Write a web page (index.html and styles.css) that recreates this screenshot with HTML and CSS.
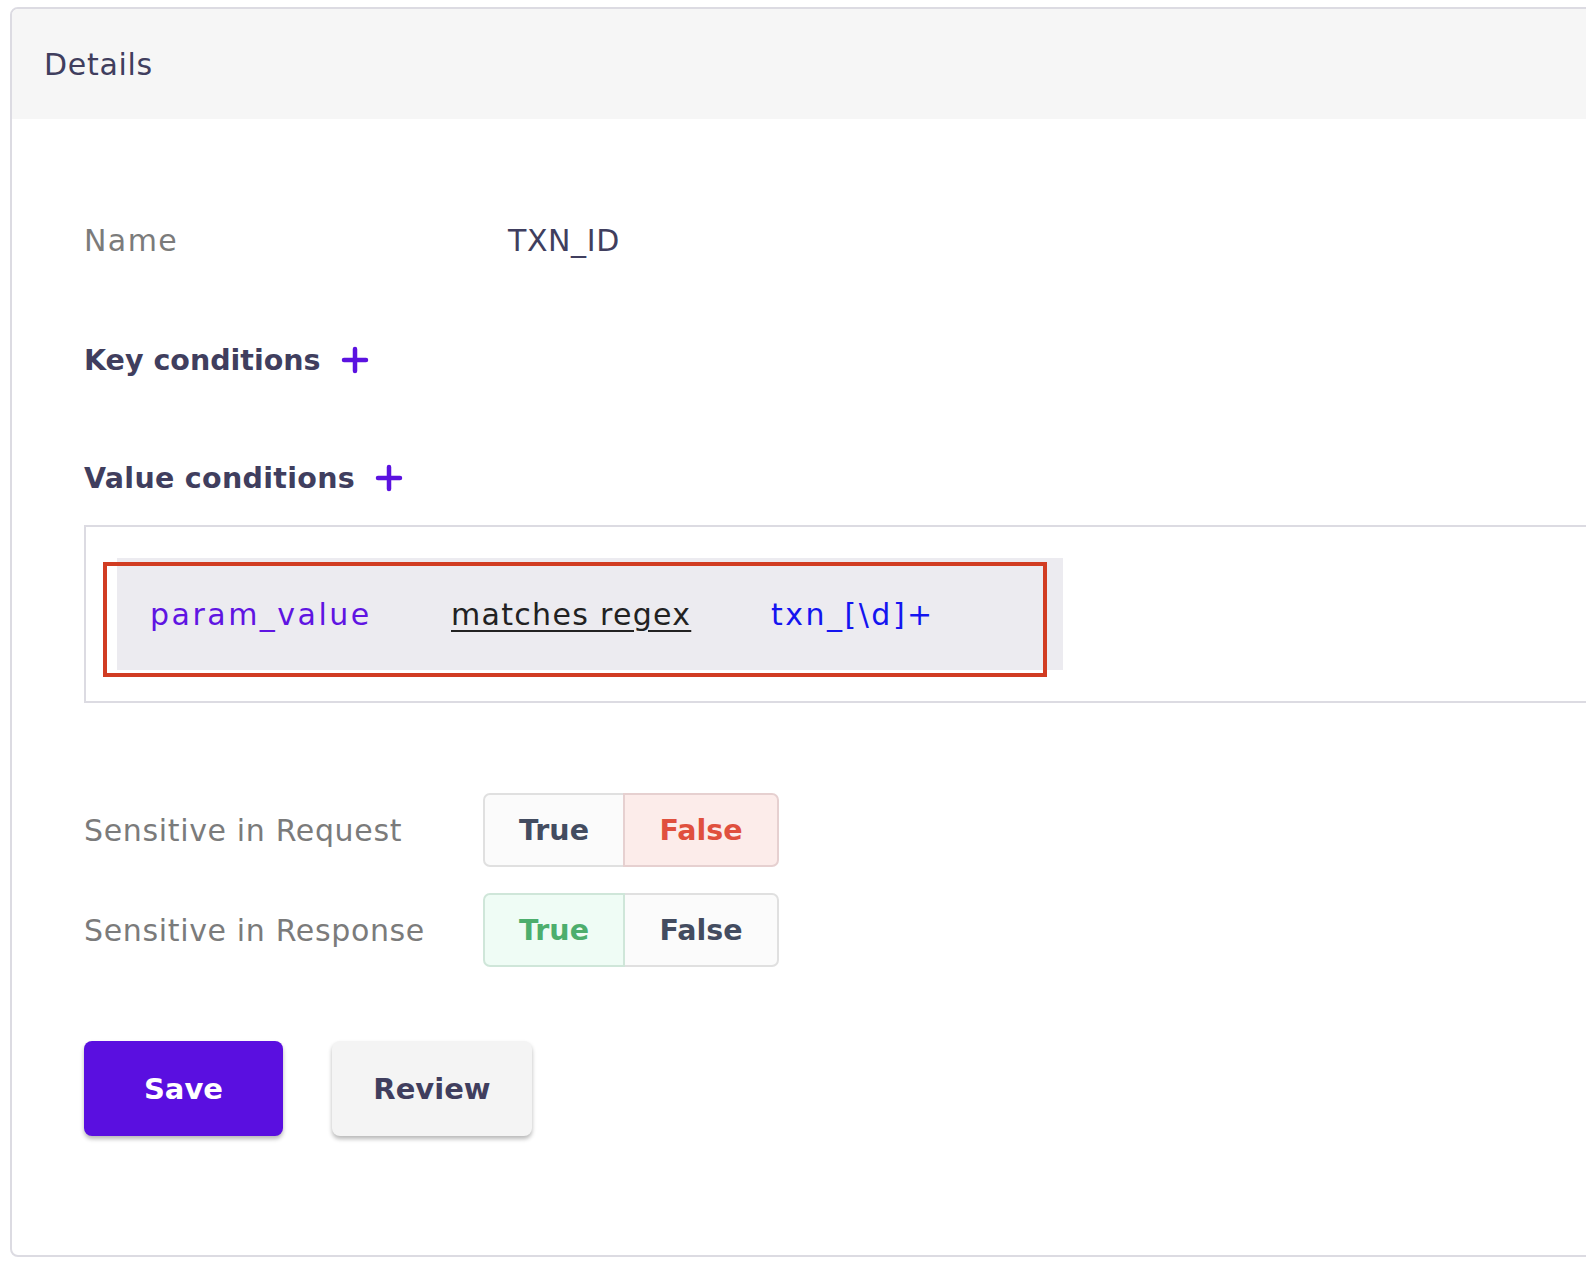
FILE: index.html
```html
<!DOCTYPE html>
<html lang="en">
<head>
<meta charset="utf-8">
<title>Details</title>
<link rel="stylesheet" href="styles.css">
</head>
<body>
<div class="card">
  <div class="card-header">Details</div>
  <div class="card-body">
    <div class="field-row">
      <div class="field-label">Name</div>
      <div class="field-value">TXN_ID</div>
    </div>

    <div class="section-title key-title">
      <span>Key conditions</span>
      <svg class="plus" viewBox="0 0 28 28" width="28" height="28"><path d="M3 14H25M14 3V25" stroke="#5b12e0" stroke-width="4.5" stroke-linecap="round" fill="none"/></svg>
    </div>

    <div class="section-title value-title">
      <span>Value conditions</span>
      <svg class="plus" viewBox="0 0 28 28" width="28" height="28"><path d="M3 14H25M14 3V25" stroke="#5b12e0" stroke-width="4.5" stroke-linecap="round" fill="none"/></svg>
    </div>

    <div class="conditions-box">
      <div class="condition">
        <span class="cond-param">param_value</span>
        <span class="cond-op">matches regex</span>
        <span class="cond-value">txn_[\d]+</span>
        <div class="highlight"></div>
      </div>
    </div>

    <div class="toggle-row first">
      <div class="toggle-label">Sensitive in Request</div>
      <div class="toggle">
        <div class="opt opt-true">True</div>
        <div class="opt opt-false sel-false">False</div>
      </div>
    </div>
    <div class="toggle-row">
      <div class="toggle-label">Sensitive in Response</div>
      <div class="toggle">
        <div class="opt opt-true sel-true">True</div>
        <div class="opt opt-false">False</div>
      </div>
    </div>

    <div class="actions">
      <button class="btn btn-primary">Save</button>
      <button class="btn btn-secondary">Review</button>
    </div>
  </div>
</div>
</body>
</html>
```

FILE: styles.css
```css
html, body {
  margin: 0;
  padding: 0;
  background: #ffffff;
  overflow: hidden;
}
body {
  font-family: "DejaVu Sans", "Open Sans", sans-serif;
  color: #403e5e;
}
.card {
  margin: 7px 0 0 10px;
  width: 1640px;
  height: 1250px;
  box-sizing: border-box;
  border: 2px solid #dcdbe2;
  border-radius: 8px;
  overflow: hidden;
}
.card-header {
  height: 110px;
  background: #f6f6f6;
  display: flex;
  align-items: center;
  padding-left: 32px;
  font-size: 30px;
  font-weight: 400;
  letter-spacing: 0.7px;
  color: #403e5e;
}
.card-body {
  padding: 101px 0 0 72px;
}
.field-row {
  display: flex;
  height: 40px;
  align-items: center;
}
.field-label {
  width: 424px;
  font-size: 30px;
  letter-spacing: 1.4px;
  color: #7b7b7b;
}
.field-value {
  font-size: 30px;
  letter-spacing: 0.6px;
  color: #403e5e;
}
.section-title {
  display: flex;
  align-items: center;
  height: 40px;
  gap: 20px;
  font-size: 28.5px;
  font-weight: 700;
  color: #403e5e;
}
.value-title span { letter-spacing: 0.3px; }
.key-title { margin-top: 80px; }
.value-title { margin-top: 78px; }
.plus { display: block; margin-top: 0; }
.conditions-box {
  margin-top: 27px;
  width: 1600px;
  height: 178px;
  box-sizing: border-box;
  border: 2px solid #dcdbe2;
  padding: 31px;
}
.condition {
  position: relative;
  width: 946px;
  height: 112px;
  background: #ecebf0;
  display: grid;
  grid-template-columns: 301px 320px auto;
  align-items: center;
  padding-left: 33px;
  box-sizing: border-box;
  font-size: 30px;
}
.cond-param { color: #5f14e2; letter-spacing: 2.5px; }
.cond-op {
  color: #222222;
  letter-spacing: 1.3px;
  text-decoration: underline;
  text-decoration-thickness: 2px;
  text-underline-offset: 5px;
  justify-self: start;
}
.cond-value { color: #1414f0; letter-spacing: 2.5px; }
.highlight {
  position: absolute;
  left: -14px;
  top: 4px;
  width: 944px;
  height: 115px;
  box-sizing: border-box;
  border: 4.5px solid #d13c22;
}
.toggle-row {
  display: flex;
  align-items: center;
  margin-top: 26px;
}
.toggle-row.first { margin-top: 90px; }
.toggle-label {
  width: 399px;
  font-size: 30px;
  letter-spacing: 0.65px;
  color: #7b7b7b;
}
.toggle {
  display: flex;
}
.opt {
  height: 74px;
  box-sizing: border-box;
  border: 2px solid #e0e0e0;
  background: #fbfbfb;
  display: flex;
  align-items: center;
  justify-content: center;
  font-size: 28.5px;
  font-weight: 700;
  color: #434c60;
  position: relative;
}
.opt-true { width: 142px; border-radius: 7px 0 0 7px; }
.opt-false { width: 156px; border-radius: 0 7px 7px 0; margin-left: -2px; }
.opt.sel-false {
  background: #fcecea;
  border-color: #e6d0d0;
  color: #e0503e;
  z-index: 1;
}
.opt.sel-true {
  background: #effcf5;
  border-color: #cfe6d9;
  color: #4dae6d;
  z-index: 1;
}
.actions {
  display: flex;
  gap: 49px;
  margin-top: 74px;
}
.btn {
  width: 199px;
  height: 95px;
  border: none;
  border-radius: 8px;
  font-family: "DejaVu Sans", "Open Sans", sans-serif;
  font-size: 29px;
  font-weight: 700;
  box-shadow: 0 3px 4px rgba(0, 0, 0, 0.28);
  cursor: pointer;
}
.btn-primary {
  background: #5a0fe0;
  color: #ffffff;
}
.btn-secondary {
  width: 200px;
  background: #f4f4f4;
  color: #403e5e;
}
```
